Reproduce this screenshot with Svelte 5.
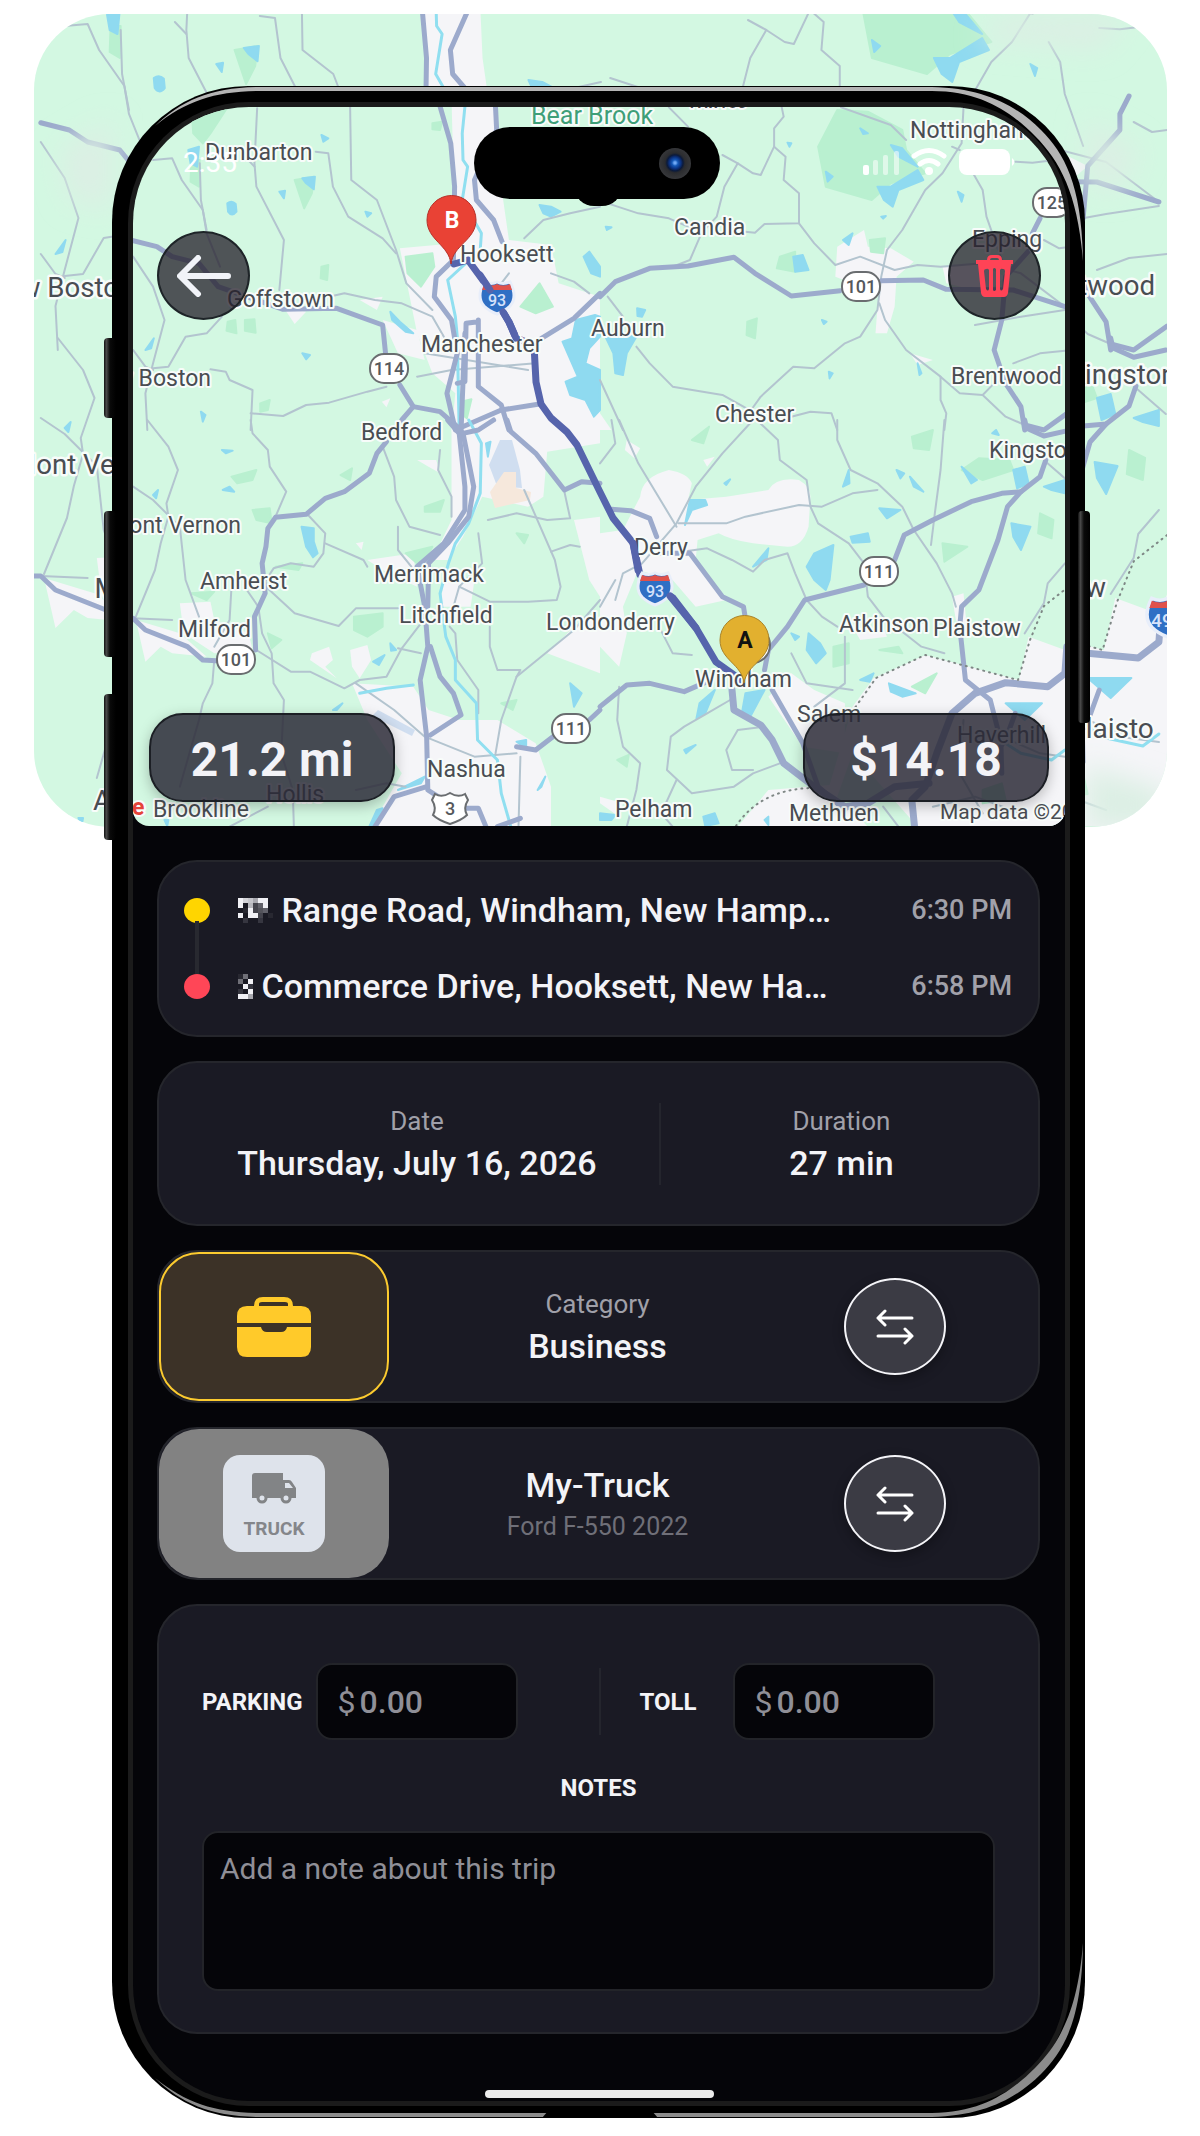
<script lang="ts">
  type Quad = { at: string, urban: string[], park: string[], water: string[], river: string[], minor: string[], major: string[], wide: string[] }

  // the map is kept in four tiles, each with its own 1568 x 1290 grid
  const tiles: Quad[] = [
    {
      at: 'scale(0.38265 0.33333)',
      urban: [
        'M1180 300 L1300 300 L1310 560 L1330 720 L1440 735 L1460 850 L1568 890 L1568 1295 L1180 1295 L1190 1180 L1130 1120 L1090 1000 L1045 745 L1190 730 Z',
        'M1000 960 L1090 990 L1110 1080 L1040 1060 Z',
        'M740 920 L800 935 L770 972 Z',
        'M940 900 L1000 890 L985 930 Z',
        'M998 1205 L1020 1195 L1010 1222 Z'
      ],
      park: [
        'M500 320 L590 330 L550 400 L530 430 L505 400 Z',
        'M770 540 L820 530 L815 580 L795 625 Z',
        'M1060 770 L1130 760 L1135 800 L1100 860 L1065 820 Z',
        'M1360 920 L1410 850 L1445 920 L1400 940 Z',
        'M500 480 L522 480 L520 560 L498 545 Z',
        'M595 965 L615 960 L618 1000 L592 992 Z M640 960 L665 958 L668 998 L640 992 Z',
        'M840 800 L858 795 L855 840 L838 835 Z',
        'M1205 1205 L1232 1198 L1220 1255 L1204 1240 Z',
        'M680 1210 L705 1200 L700 1230 L680 1235 Z',
        'M1130 370 L1155 365 L1150 390 L1130 388 Z'
      ],
      water: [
        'M594 610 Q606 600 616 612 L618 635 Q606 652 596 635 Z',
        'M790 535 L823 530 L820 568 L800 550 Z',
        'M730 575 L745 572 L742 595 Z',
        'M492 450 L520 440 L515 500 L498 490 Z',
        'M1495 1015 L1505 960 L1555 945 L1568 950 L1568 1010 L1540 1045 L1530 1090 L1568 1110 L1568 1230 L1552 1250 L1530 1200 L1490 1185 L1478 1145 L1510 1130 L1470 1025 Z',
        'M1525 770 L1540 755 L1568 800 L1568 830 L1545 820 Z',
        'M1410 615 L1440 620 L1465 635 L1440 650 L1420 640 Z',
        'M1020 935 L1045 965 L1080 1000 L1060 995 L1025 960 Z',
        'M790 1060 L810 1065 L800 1078 Z M525 1235 L537 1245 L530 1265 Z M955 635 L970 640 L960 650 Z',
        'M840 405 L858 415 L845 425 Z M380 1050 L402 1015 L395 1045 Z M600 910 L612 915 L604 928 Z'
      ],
      river: [
        'M1215 320 L1208 400 L1210 480 L1222 500 L1208 600 L1258 700 L1255 750 L1170 840 L1190 950 L1195 1010 L1200 1290'
      ],
      minor: [
        'M672 325 L665 490 L670 560 L742 720 L730 870',
        'M915 322 L918 540 L985 600 L1035 750 L1062 850 L1130 930',
        'M400 480 L450 475 L475 540 L530 630 L540 700 L575 800',
        'M640 470 L665 500',
        'M825 455 L858 460 L870 560 L910 650 L1000 715 L1035 760',
        'M522 490 L525 600 L540 690',
        'M348 770 L400 860 L430 960 L400 1090 L380 1180 L385 1290',
        'M400 1105 L440 1100 L485 1010 L540 1000 L580 950',
        'M348 1050 L380 1100 L400 1110',
        'M550 1108 L590 1115 L600 1140 L660 1170 L655 1290',
        'M655 1240 L740 1248 L800 1215 L860 1208 L960 1175 L1010 1160',
        'M860 890 L900 880 L980 900 L1050 910 L1130 950 L1160 1010',
        'M1370 715 L1420 660 L1490 640 L1568 620',
        'M1330 820 L1310 850 M1440 820 L1500 845 L1540 880',
        'M1090 1130 L1180 1110 L1400 1090 M1110 1060 L1380 1110'
      ],
      major: [
        'M1130 150 L1135 260 L1178 430 L1188 560 L1185 780 L1140 830 L1135 890 L1180 960 L1195 1060 L1168 1180 L1190 1290',
        'M1270 150 L1295 322 L1298 390 L1240 540 L1245 600 L1290 660 L1312 725',
        'M348 722 L410 740 L450 770 L520 790 L570 860 L740 928 L880 925 L1000 975 L1008 1065',
        'M1045 1155 L1080 1220 L1150 1235 L1200 1285 L1310 1230 L1410 1212',
        'M1050 1260 L1080 1220',
        'M1568 880 L1500 955 L1415 1015',
        'M1250 960 L1250 1160 L1310 1215 L1330 1290 M1250 965 L1218 970 L1215 1145 L1195 1150',
        'M1215 1000 L1205 1290'
      ],
      wide: []
    },
    {
      at: 'translate(600 0) scale(0.38265 0.33333)',
      urban: [
        'M620 740 L690 690 L700 740 L760 745 L820 785 L775 830 L770 920 L750 1000 L720 1000 L728 880 L615 830 Z',
        'M895 800 L990 790 L1060 830 L1010 880 L905 850 Z',
        'M0 1240 L30 1290 L0 1290 Z',
        'M810 1060 L870 1080 L830 1095 Z'
      ],
      park: [
        'M570 440 L620 330 L700 335 L790 390 L800 450 L850 520 L760 550 L710 600 L590 560 Z',
        'M470 770 L510 755 L510 815 L462 805 Z',
        'M705 720 L745 715 L740 760 L708 755 Z',
        'M385 965 L410 955 L405 1015 L383 1005 Z'
      ],
      water: [
        'M725 560 L760 560 L830 510 L845 540 L780 570 L765 620 L742 600 Z',
        'M760 435 L790 445 L830 500 L780 470 Z',
        'M505 770 L530 765 L545 810 L510 815 Z',
        'M10 1000 L95 1010 L70 1060 L60 1125 L40 1120 L35 1060 Z',
        'M635 720 L660 700 L650 735 Z M935 575 L950 585 L945 605 Z M680 385 L700 400 L688 402 Z',
        'M97 925 L118 930 L110 950 L98 948 Z M580 960 L592 965 L585 972 Z M598 1115 L608 1120 L600 1135 Z',
        'M590 515 L608 530 L595 545 Z M830 1090 L840 1120 L835 1125 Z M735 650 L747 648 L740 656 Z',
        'M15 680 L30 682 L18 690 Z M490 428 L500 430 L495 440 Z'
      ],
      river: [],
      minor: [
        'M475 322 L480 350 L455 385 L455 440 L420 525 L400 520 L360 490 L320 465',
        'M360 490 L325 560 L305 650 L265 700 L235 780 L195 798',
        'M455 440 L485 470 L480 540 L520 580 L520 670 L430 672 L405 698 L380 695',
        'M20 610 L100 640 L180 655 L230 680',
        'M520 670 L560 730 L615 795 L680 770 L770 810 L830 795 L890 800 L1000 790 L1100 820 L1215 920',
        'M180 322 L230 380 M630 322 L760 375 L800 420 M950 322 L945 430 L895 520 L850 570 L790 690 L750 750 L735 830 L725 930 L680 1010 L640 1030 L560 1105 L505 1100 L420 1190 L395 1230',
        'M730 910 L745 960 L800 1050 L890 1130 L940 1180 L1000 1185 L1060 1250 L1110 1275',
        'M890 1130 L890 1200 L905 1240 L900 1290',
        'M1000 1185 L1030 1150 L1075 1130',
        'M920 440 L940 450 M975 520 L1000 570 L1010 650 L1050 780',
        'M1085 485 L1130 488 L1190 480 M1160 720 L1200 745 L1233 740 M980 975 L1100 950 L1215 930',
        'M20 890 L60 950 M95 1040 L130 1090 L190 1160 L320 1185 L390 1230',
        'M500 1250 L550 1235 L605 1240 L620 1290 M0 1140 L60 1290',
        'M1080 1090 L1150 1060 L1233 1050'
      ],
      major: [
        'M0 890 L40 845 L130 805 L230 798 L350 772 L405 820 L500 888 L628 872',
        'M735 842 L845 840 L905 868 L1080 870 L1215 920',
        'M1150 655 L1130 700 L1130 740 L1060 830 L1050 960 L1030 1050 L1060 1150 L1100 1220 L1110 1290',
        'M1110 1275 L1160 1290 L1233 1230'
      ],
      wide: []
    },
    {
      at: 'translate(0 420) scale(0.38265 0.33333)',
      urban: [
        'M1180 0 L1568 0 L1568 70 L1430 95 L1420 230 L1380 260 L1260 230 L1210 350 L1170 420 L1130 420 L1180 300 Z',
        'M1500 300 L1568 290 L1568 530 L1540 480 Z',
        'M920 790 L1080 800 L1120 870 L1200 900 L1300 900 L1400 970 L1440 1100 L1440 1220 L970 1220 L1050 1060 L960 900 Z',
        'M1500 620 L1568 590 L1568 760 L1430 700 Z',
        'M470 550 L550 545 L560 600 L650 640 L660 690 L560 700 L480 640 Z',
        'M355 600 L470 640 L540 710 L450 700 L420 680 L380 725 Z',
        'M815 700 L860 680 L870 720 L850 740 L880 775 L810 720 Z M915 690 L960 675 L970 720 L940 775 L920 740 Z',
        'M1090 120 L1140 120 L1150 160 L1120 140 Z M930 370 L950 365 L945 390 Z M960 420 L1080 400 L1090 500 L1000 450 Z',
        'M1160 480 L1240 480 L1230 560 L1150 560 Z'
      ],
      park: [
        'M925 590 L1000 580 L1000 620 L960 650 L925 630 Z',
        'M605 170 L670 150 L660 180 L620 190 Z M890 165 L920 145 L915 180 Z',
        'M660 270 L705 265 L710 310 L670 300 Z M1110 260 L1160 240 L1150 275 L1110 275 Z',
        'M1060 400 L1130 380 L1100 440 Z M1310 850 L1350 840 L1340 870 Z M700 640 L735 660 L710 685 Z',
        'M1350 340 L1380 345 L1370 370 Z M500 520 L560 515 L540 540 Z M720 440 L790 430 L780 450 Z'
      ],
      water: [
        'M788 320 L820 325 L820 365 L830 400 L818 412 L800 380 Z',
        'M1490 790 L1520 820 L1500 860 Z M975 725 L1005 705 L990 735 Z M1020 670 L1035 690 L1022 692 Z',
        'M870 870 L895 850 L880 870 Z M580 90 L608 92 L590 100 Z M582 210 L600 200 L612 215 Z',
        'M400 225 L413 210 L408 235 Z M1405 1110 L1425 1070 L1415 1100 Z M1350 965 L1375 960 L1375 985 Z',
        'M1040 1110 L1110 1070 L1100 1090 Z M430 1200 L440 1200 L437 1218 Z',
        'M985 1170 L1000 1165 L975 1220 L965 1220 Z M1270 70 L1282 65 L1275 110 Z'
      ],
      river: [
        'M1225 0 L1258 70 L1255 220 L1225 310 L1190 370 L1172 430 L1150 520 L1165 650 L1190 720 L1190 780 L1245 850 L1248 960 L1300 1020 L1310 1120 L1335 1220',
        'M940 820 L1010 805 L1080 795'
      ],
      minor: [
        'M385 0 L440 80 L465 150 L435 250 L440 290 L420 370 L405 450 L355 590',
        'M348 200 L400 240 L470 320 L485 480 L520 590',
        'M655 0 L660 40 L700 90 L705 140 L748 215 L720 290',
        'M805 285 L850 340 L845 400 L820 440 L760 430 L715 445 L695 480',
        'M850 370 L950 420 L960 440',
        'M695 500 L770 580 L885 618 L930 565 L1040 565',
        'M1000 80 L1030 170 L1035 240 L1070 320 L1150 345',
        'M1150 90 L1145 150 L1180 230 L1180 290',
        'M645 510 L675 560 L685 640 L710 700 L715 790 L742 840 L735 1000 L765 1110 L768 1220',
        'M670 690 L760 755 L810 755 L900 805 L940 780 L1010 770 L1050 685 L1100 610',
        'M560 720 L555 790 L530 850 L520 900 L470 1100',
        'M930 790 L1030 870 L1110 950 L1240 1010 L1350 1000',
        'M1040 685 L1100 700 M1175 620 L1190 640 L1195 720 L1250 810 L1250 880',
        'M1370 210 L1450 420 L1465 500 L1455 540 L1380 545 L1280 545 L1200 500',
        'M1280 620 L1280 680 L1300 750 L1360 750 L1350 770 L1310 900 L1295 1000',
        'M1350 770 L1500 630 L1568 540 M1275 300 L1350 280 L1430 300 L1490 295 L1475 215',
        'M1250 340 L1260 430 L1200 500 L1175 600 M1040 320 L1040 390 L1075 440',
        'M1440 395 L1490 375 L1515 380 M605 500 L600 600 L560 680',
        'M600 1220 L700 1160 M1360 1010 L1355 1220 M930 1110 L1010 1090 L1060 1100',
        'M348 595 L450 600'
      ],
      major: [
        'M1010 65 L985 100 L965 160 L900 215 L850 235 L800 283 L720 292 L700 325 L695 380 L685 430 L693 520 L665 590 L668 690',
        'M1170 0 L1200 40 L1215 200 L1215 270 L1160 370 L1090 440 L1110 560 L1118 680 L1098 780 L1115 950 L1118 1110 L1145 1130',
        'M1185 10 L1210 40 L1238 200 L1225 290 L1170 370 L1120 430 L1118 560',
        'M1210 40 L1250 30 L1290 0',
        'M1125 680 L1150 770 L1185 820 L1205 885 L1125 945',
        'M1115 1100 L1030 1130 L980 1220',
        'M1215 1165 L1250 1165 L1270 1220 M1300 1220 L1360 1195',
        'M300 595 L348 595 L380 630 L490 680 L530 720 L565 722',
        'M1350 980 L1400 990 L1445 950 M1540 900 L1568 870',
        'M1325 0 L1335 35 L1400 100 L1475 210 L1520 185 L1568 190'
      ],
      wide: []
    },
    {
      at: 'translate(600 420) scale(0.38265 0.33333)',
      urban: [
        'M105 230 Q110 170 180 150 Q230 160 240 190 L230 240 L330 230 L440 210 Q460 170 520 180 Q550 200 550 230 L545 320 Q530 380 490 380 L400 370 Q340 360 310 340 L255 360 L250 420 L330 540 L250 560 L190 480 L100 450 L60 560 L70 640 L50 740 L0 680 L0 340 L60 330 Z',
        'M70 60 L105 85 L90 115 L65 90 Z',
        'M715 775 L850 705 L1095 780 L1120 650 L1215 690 L1233 640 L1233 1220 L830 1220 L660 1000 L620 1130 L700 1220 L360 1220 L440 1110 L600 1095 L660 860 Z',
        'M500 760 L560 810 L640 850 L640 1000 L530 980 L440 830 Z',
        'M920 530 L950 520 L960 640 L930 600 Z M670 640 L740 620 L750 650 L680 660 Z',
        'M810 620 L850 610 L840 640 Z M0 1130 L60 1150 L50 1190 L0 1150 Z M270 120 L300 110 L280 140 Z'
      ],
      park: [
        'M945 150 L990 115 L1070 120 L1080 150 L1000 180 Z',
        'M1150 280 L1185 300 L1180 355 L1145 340 Z M895 370 L960 380 L900 425 Z',
        'M815 50 L870 30 L860 90 L820 85 Z M240 60 L285 20 L270 70 Z',
        'M815 800 L880 760 L850 820 Z M45 1020 L75 1005 L70 1040 Z M610 680 L650 670 L650 730 L610 740 Z',
        'M1000 1110 L1050 1090 L1060 1140 L1000 1150 Z M730 690 L780 680 L790 700 Z'
      ],
      water: [
        'M540 440 L560 400 L610 375 L600 480 L590 510 L560 480 Z',
        'M235 240 L275 240 L280 255 L240 270 L222 315 Z M400 440 L440 385 L435 420 Z',
        'M730 265 L785 270 L750 295 Z M655 350 L700 340 L705 365 L660 368 Z M635 200 L650 150 L652 190 Z',
        'M1080 150 L1110 140 L1120 190 L1090 205 Z M1075 310 L1125 320 L1100 390 L1080 350 Z',
        'M1160 200 L1215 180 L1215 220 L1180 210 Z M945 140 L985 180 L970 190 Z',
        'M545 640 L575 670 L590 700 L565 730 L540 690 Z M755 790 L825 820 L790 830 L760 815 Z',
        'M380 820 L430 810 L395 885 L370 885 Z M260 850 L300 810 L275 880 L252 895 Z M1060 850 L1155 850 L1110 900 Z',
        'M680 780 L715 760 L705 785 Z M220 990 L250 975 L225 1000 Z M270 1190 L300 1180 L310 1210 L275 1218 Z',
        'M810 170 L845 215 L820 200 Z M775 150 L795 160 L785 175 Z M325 190 L340 178 L330 195 Z M1025 40 L1035 30 L1042 45 Z',
        'M0 1180 L40 1185 L30 1200 L0 1200 Z M430 1200 L440 1190 L440 1215 Z M500 640 L520 650 L510 660 Z'
      ],
      river: [
        'M1215 990 L1180 1020 L1100 1000 L1060 970'
      ],
      minor: [
        'M50 0 L100 130 L200 320',
        'M400 0 L320 100 L250 200 L200 310 L110 430 L60 460 L40 540',
        'M410 0 L465 60 L470 120 L540 180 L550 260 L570 310 L650 370 L690 430 L700 530 L740 590 L840 680 L900 700',
        'M620 0 L620 60 L655 150 L725 190 L790 260 L820 330 L880 430 L920 520 L930 560',
        'M900 0 L890 150 L875 280 L865 375',
        'M205 310 L330 310 L380 290 L520 255 L580 260 L660 220 L725 210',
        'M215 395 L280 385 L345 420 L400 455 L430 420 L490 400 L510 460 L540 540 L580 590 L620 620',
        'M340 840 L280 880 L220 920 L185 950 L175 1050 L240 1120 L350 1100 L400 1060 L470 1030',
        'M50 800 L45 900 L60 980 L105 1030 L95 1110 L70 1220',
        'M360 930 L330 990 L345 1050 L400 1050 M360 930 L430 920 M200 1080 L160 1180 L190 1220',
        'M500 700 L540 790 L660 810 M640 650 L640 790 L560 860',
        'M150 610 L190 700 L240 705 M0 560 L40 480 M0 130 L40 70 L30 0',
        'M1215 430 L1170 490 L1160 550 L1110 640 M1165 125 L1230 190',
        'M1070 960 L1150 1000 L1215 1010 M870 1160 L980 1130 L1100 1180 M740 1160 L780 1220 M950 900 L940 1060 L1000 1180'
      ],
      major: [
        'M0 860 L70 795 L130 790 L220 815 L280 785',
        'M30 268 L80 272 L130 295 L148 350',
        'M160 400 L235 400 L320 530 L375 560 L382 610',
        'M430 750 L440 690 L490 620 L535 540 L690 495',
        'M770 420 L795 345 L870 300 L970 245 L1050 220 L1100 215 L1150 170 L1165 120',
        'M1110 0 L1115 25 L1160 48 L1230 30',
        'M1100 215 L1065 260 L1040 360 L990 510 L945 560 L940 620 L955 780 L1020 840 L1040 930',
        'M450 810 L530 970 L570 1100 L640 1170',
        'M1050 1060 L1048 980 L1066 940 L1085 880'
      ],
      wide: [
        'M822 1220 L815 1140 L850 1100 L880 1000 L920 880 L980 820 L1060 788 L1170 800 L1215 760 L1220 680',
        'M345 810 L350 870 L420 915 L450 960 L480 1030 L560 1100 L640 1160 L700 1150 L770 1100 L860 1090'
      ]
    }
  ]

  const route = 'M454 264 L468 260 L490 290 L509 322 L516 338 L534 345 L536 382 L541 404 L551 418 L567 432 L577 445 L600 492 L613 518 L633 543 L640 575 L657 587 L673 598 L696 628 L716 662 L744 682'

  const towns = [
    ['New Boston', 211, 386, 'end'], ['Goffstown', 227, 307], ['Hooksett', 460, 262], ['Manchester', 421, 352],
    ['Candia', 674, 235], ['Auburn', 591, 336], ['Brentwood', 951, 384], ['Chester', 715, 422],
    ['Bedford', 361, 440], ['Kingston', 989, 458], ['Mont Vernon', 241, 533, 'end'], ['Amherst', 200, 589],
    ['Merrimack', 374, 582], ['Litchfield', 399, 623], ['Londonderry', 546, 630], ['Milford', 178, 637],
    ['Derry', 634, 555], ['Windham', 695, 687], ['Atkinson', 839, 632], ['Plaistow', 933, 636],
    ['Salem', 797, 722], ['Nashua', 427, 777], ['Pelham', 615, 817], ['Methuen', 789, 821]
  ]

  // towns that show on the phone only
  const innerTowns = [
    ['Dunbarton', 205, 160], ['Nottingham', 910, 138], ['Epping', 972, 247], ['Haverhill', 957, 743],
    ['Hollis', 266, 802], ['Brookline', 153, 817]
  ]

  const shields = [
    ['114', 389, 369], ['101', 861, 287], ['101', 236, 660], ['111', 571, 729], ['111', 879, 572]
  ]

  const stops = [
    {
      colour: 'yellow', address: 'Range Road, Windham, New Hampshire', time: '6:30 PM',
      mask: ['fdcaff0', 'f0b35f0', '01f3450', 'f0ff301', '0200200']
    },
    {
      colour: 'red', address: 'Commerce Drive, Hooksett, New Hampshire', time: '6:58 PM',
      mask: ['160', '60f', '0f2', '20f', 'ffa']
    }
  ]

  let parking = $state('')
  let toll = $state('')
  let notes = $state('')
</script>

{#snippet terrain()}
  <rect class="land" x="-20" y="60" width="1240" height="820" />
  {#each tiles as t}
    <g transform={t.at}>
      {#each t.urban as d}<path class="urban" {d} />{/each}
      {#each t.park as d}<path class="park" {d} />{/each}
      {#each t.water as d}<path class="water" {d} />{/each}
    </g>
  {/each}
  <path class="field" d="M489 465 L500 440 L512 440 L520 470 L522 488 L497 486 Z M378 710 L415 730 L412 736 L372 716 Z" />
  <path class="sand" d="M490 492 L504 472 L516 472 L516 488 L531 492 L530 500 L495 508 Z" />
  {#each tiles as t}
    <g transform={t.at}>
      {#each t.minor as d}<path class="minor" {d} />{/each}
      {#each t.river as d}<path class="river" {d} />{/each}
      {#each t.major as d}<path class="major" {d} />{/each}
      {#each t.wide as d}<path class="wide" {d} />{/each}
    </g>
  {/each}
  <path class="border" d="M736 826 Q760 790 810 788 M852 712 L876 678 L925 655 L1018 680 L1030 640 L1044 606 L1072 584" />
  <path class="route" d={route} />
{/snippet}

{#snippet town(name, x, y, anchor)}
  <text class="town" {x} {y} text-anchor={anchor ?? 'start'}>{name}</text>
{/snippet}

{#snippet shield(num, x, y)}
  <rect class="plate" x={x - 19} y={y - 15} width="38" height="29" rx="14" />
  <text class="num" {x} y={y + 6}>{num}</text>
{/snippet}

{#snippet interstate(num, x, y)}
  <g transform="translate({x} {y})">
    <path class="crest" d="M-13 -15 Q-6 -12 0 -15 Q6 -12 13 -15 Q21 0 13 9 Q8 14 0 17 Q-8 14 -13 9 Q-21 0 -13 -15 Z" />
    <path class="crest-top" d="M-13 -13 Q-6 -10 0 -13 Q6 -10 13 -13 L15 -7 H-15 Z" />
    <text class="crest-num" y="9">{num}</text>
  </g>
{/snippet}

{#snippet places()}
  {#each towns as [name, x, y, anchor]}
    {@render town(name, x, y, anchor)}
  {/each}
  {#each shields as [num, x, y]}
    {@render shield(num, x, y)}
  {/each}
{/snippet}

{#snippet swapIcon()}
  <svg class="swap" viewBox="0 0 38 36" aria-hidden="true">
    <path d="M36 9 H2 M9 2 L2 9 L9 16 M2 27 H36 M29 20 L36 27 L29 34" />
  </svg>
{/snippet}

<main class="stage">
  <svg class="backdrop" viewBox="34 14 1133 813" preserveAspectRatio="xMidYMid slice" aria-hidden="true">
    <defs>
      <filter id="haze"><feGaussianBlur stdDeviation="14" /></filter>
    </defs>
    <g transform="translate(-119 -166) scale(1.2)">
      {@render terrain()}
      {@render places()}
      {@render interstate('495', 1072, 652)}
    </g>
    <g class="haze" filter="url(#haze)">
      <path d="M60 150 L112 120 L112 210 L70 200 Z M1085 120 L1140 150 L1120 190 L1090 190 Z M1000 14 L1130 14 L1100 50 L980 40 Z" />
      <path d="M1085 765 L1167 790 L1167 830 L1085 830 Z" />
    </g>
    <text class="town outer" x="1068" y="738">Plaisto</text>
    <text class="town outer" x="93" y="810">A</text>
  </svg>

  <div class="phone">
    <span class="key silent"></span>
    <span class="key up"></span>
    <span class="key down"></span>
    <span class="key power"></span>

    <div class="screen">
      <section class="map">
        <svg class="chart" viewBox="133 107 932 719" preserveAspectRatio="xMidYMid slice" role="img" aria-label="Route from Windham to Hooksett">
          {@render terrain()}
          {@render interstate('93', 497, 297)}
          {@render interstate('93', 655, 588)}
          {@render places()}
          {#each innerTowns as [name, x, y]}
            {@render town(name, x, y)}
          {/each}
          {@render shield('125', 1052, 203)}
          <path class="route" d="M480 275 L490 290 M503 312 L509 322 L516 338 M633 543 L638 570 M670 596 L696 628" />
          <path class="plate" d="M435 794 Q442 798 450 793 Q458 798 465 794 L468 800 Q463 808 467 815 Q462 820 450 824 Q438 820 433 815 Q437 808 432 800 Z" />
          <text class="num" x="450" y="815">3</text>
          <text class="town reserve" x="531" y="124">Bear Brook</text>
          <text class="town peaks" x="690" y="108">PAWTUC</text>
          <text class="town fine" x="940" y="819">Map data ©2026</text>
          <text class="town pin-red" x="132" y="815">e</text>

          <circle class="plate" cx="752" cy="645" r="18" />
          <path class="pin a" d="M744 683 C742 664 720 660 720 640 A24 24 0 0 1 769 640 C769 660 747 664 744 683 Z" />
          <text class="letter a" x="745" y="648">A</text>
          <path class="pin b" d="M451 264 C449 245 427 240 427 220 A24 24 0 0 1 476 220 C476 240 453 245 451 264 Z" />
          <text class="letter b" x="452" y="228">B</text>
        </svg>

        <header class="status">
          <time>2:35</time>
          <svg class="signals" viewBox="0 0 152 30" aria-hidden="true">
            <rect x="0" y="18" width="6" height="10" rx="2" />
            <g opacity="0.55">
              <rect x="10" y="13" width="5" height="15" rx="2" />
              <rect x="20" y="8" width="5" height="20" rx="2" />
              <rect x="31" y="4" width="5" height="24" rx="2" />
            </g>
            <path class="wave" d="M51 9 Q66 -2 81 9 M57 17 Q66 10 75 17" />
            <circle cx="66" cy="24" r="4" />
            <rect x="96" y="2" width="51" height="26" rx="8" />
            <path d="M149 11 Q154 15 149 19 Z" />
          </svg>
        </header>

        <nav class="controls">
          <button class="round" aria-label="Back">
            <svg class="back" viewBox="0 0 54 42"><path d="M51 21 H4 M21 3 L3 21 L21 39" /></svg>
          </button>
          <button class="round" aria-label="Delete trip">
            <svg class="bin" viewBox="0 0 37 42">
              <path fill-rule="evenodd" d="M11 5 Q11 0 16 0 H21 Q26 0 26 5 H37 V9 H35 L32 38 Q31 42 28 42 H9 Q6 42 5 38 L2 9 H0 V5 Z M14 5 H23 Q23 3 21 3 H16 Q14 3 14 5 Z M10 14 Q8 14 8 16 L10 34 Q12 37 13 34 V15 Q12 13 10 14 Z M17 14 V35 Q18 37 20 35 V14 Q18 12 17 14 Z M24 15 V34 Q25 37 27 34 L29 16 Q29 14 27 14 Q25 13 24 15 Z" />
            </svg>
          </button>
        </nav>

        <div class="totals">
          <strong class="pill">21.2 mi</strong>
          <strong class="pill">$14.18</strong>
        </div>
      </section>

      <div class="cards">
        <section class="card stops">
          {#each stops as stop}
            <div class="stop">
              <span class="dot {stop.colour}"></span>
              <p class="address">
                <svg class="mask" viewBox="0 0 {stop.mask[0].length * 5} 25" style:width="{stop.mask[0].length * 5}px" aria-hidden="true">
                  {#each stop.mask as row, r}
                    {#each row as c, i}
                      <rect x={i * 5} y={r * 5} width="5" height="5" fill="#f0f0f5" fill-opacity={parseInt(c, 16) / 15} />
                    {/each}
                  {/each}
                </svg>
                {stop.address}
              </p>
              <time>{stop.time}</time>
            </div>
          {/each}
        </section>

        <section class="card facts">
          <div class="fact">
            <span class="label">Date</span>
            <span class="value">Thursday, July 16, 2026</span>
          </div>
          <div class="fact">
            <span class="label">Duration</span>
            <span class="value">27 min</span>
          </div>
        </section>

        <section class="card choice">
          <div class="tile gold">
            <svg class="case" viewBox="0 0 74 60" aria-hidden="true">
              <path fill-rule="evenodd" d="M17 9 Q17 0 26 0 H47 Q56 0 56 9 H64 Q74 9 74 19 V26 H0 V19 Q0 9 10 9 Z M22 9 H51 V7 Q51 5 48 5 H25 Q22 5 22 7 Z" />
              <path d="M0 30 H24 Q25 35 30 35 H44 Q49 35 50 30 H74 V50 Q74 60 64 60 H10 Q0 60 0 50 Z" />
            </svg>
          </div>
          <div class="picked">
            <span class="label">Category</span>
            <span class="value">Business</span>
          </div>
          <div class="action">
            <button class="change" aria-label="Change category">{@render swapIcon()}</button>
          </div>
        </section>

        <section class="card choice">
          <div class="tile grey">
            <div class="badge">
              <svg class="truck" viewBox="0 0 44 30" aria-hidden="true">
                <path fill-rule="evenodd" d="M3 0 H31 V7 H37 Q39 7 40 9 L44 15 V25 H0 V3 Q0 0 3 0 Z M33 10 V15 H41 L37 10 Z" />
                <circle cx="10" cy="25" r="4" />
                <circle cx="34" cy="25" r="4" />
              </svg>
              TRUCK
            </div>
          </div>
          <div class="picked">
            <span class="value">My-Truck</span>
            <span class="label dim">Ford F-550 2022</span>
          </div>
          <div class="action">
            <button class="change" aria-label="Change vehicle">{@render swapIcon()}</button>
          </div>
        </section>

        <form class="card extras">
          <div class="costs">
            <div class="cost">
              <label for="parking">PARKING</label>
              <span class="money">$<input id="parking" inputmode="decimal" placeholder="0.00" bind:value={parking} /></span>
            </div>
            <div class="cost">
              <label for="toll">TOLL</label>
              <span class="money">$<input id="toll" inputmode="decimal" placeholder="0.00" bind:value={toll} /></span>
            </div>
          </div>
          <label class="notes-label" for="notes">NOTES</label>
          <textarea id="notes" placeholder="Add a note about this trip" bind:value={notes}></textarea>
        </form>
      </div>

      <div class="home-bar"></div>
    </div>

    <!-- light catching the metal edge -->
    <svg class="shine" viewBox="0 0 973 2033" preserveAspectRatio="none" aria-hidden="true">
      <path fill="#b4b4b4" d="M43 40 C70 14 100 1 150 1 H820 C872 2 905 20 929 44 C953 68 970 100 971 175 C966 110 949 76 923 50 C900 27 870 5 820 5 H150 C105 5 75 14 43 40 Z" />
      <path fill="#8c8c8c" d="M43 1993 C70 2019 100 2032 150 2032 H820 C872 2031 905 2013 929 1989 C953 1965 970 1933 971 1858 C966 1923 949 1957 923 1983 C900 2006 870 2028 820 2028 H150 C105 2028 75 2019 43 1993 Z" />
      <path fill="#000" d="M430 2033 L436 2026 H540 L546 2033 Z" />
    </svg>
    <div class="island"><span class="lens"></span></div>
  </div>
</main>

<style>
  :global(body) {
    margin: 0;
    background: #fff;
  }

  .stage {
    position: relative;
    padding: 86px 115px 17px 112px;
    font-family: Roboto, "Liberation Sans", sans-serif;
    color: #f3f3f7;
  }

  .backdrop {
    position: absolute;
    top: 14px;
    left: 34px;
    width: calc(100% - 67px);
    height: 813px;
    border-radius: 76px;
  }

  .haze path {
    fill: #dcefe4;
  }

  /* map */
  .land { fill: #d3f8e2; }
  .urban { fill: #f5f5f8; }
  .park { fill: #b9f0d0; stroke: #b9f0d0; }
  .water { fill: #8fdaf0; stroke: #8fdaf0; }
  .field { fill: #d0def0; }
  .sand { fill: #f6e8dc; }

  .park, .water {
    stroke-width: 2;
    stroke-linejoin: round;
    vector-effect: non-scaling-stroke;
  }

  .minor, .major, .wide, .river, .route, .border {
    fill: none;
    stroke-linejoin: round;
    stroke-linecap: round;
    vector-effect: non-scaling-stroke;
  }

  .minor { stroke: #b3c4cf; stroke-width: 2; }
  .river { stroke: #90dff0; stroke-width: 3; }
  .major { stroke: #9caacc; stroke-width: 5; }
  .wide { stroke: #9caacc; stroke-width: 7; }
  .route { stroke: #5664ac; stroke-width: 7; }
  .border { stroke: #7e8785; stroke-width: 2; stroke-dasharray: 1 5; }

  .town {
    font-size: 23px;
    fill: #494d52;
    stroke: #f8fcfa;
    stroke-width: 4px;
    stroke-linejoin: round;
    paint-order: stroke;
  }

  .outer { font-size: 28px; }
  .reserve { font-size: 25px; fill: #3f9f78; }
  .peaks { font-size: 14px; font-weight: 700; }
  .fine { font-size: 21px; }
  .pin-red { fill: #e5443a; font-weight: 700; }

  .plate {
    fill: #fff;
    stroke: #6a6d70;
    stroke-width: 2;
  }

  .num {
    font-size: 18px;
    font-weight: 500;
    fill: #55585c;
    text-anchor: middle;
  }

  .crest { fill: #2f6fc4; stroke: #e8eefa; stroke-width: 3; }
  .crest-top { fill: #e0514b; }

  .crest-num {
    font-size: 16px;
    font-weight: 500;
    fill: #d5e2fb;
    text-anchor: middle;
  }

  .pin { stroke-width: 1; }
  .pin.a { fill: #e2b02f; stroke: #a9832a; }
  .pin.b { fill: #e94235; stroke: #b6322a; }

  .letter {
    font-size: 23px;
    font-weight: 700;
    text-anchor: middle;
  }

  .letter.a { fill: #111; }
  .letter.b { fill: #fff; }

  /* phone body */
  .phone {
    position: relative;
    z-index: 0;
    padding: 21px 20px 17px 21px;
    border-radius: 136px;
    background: #000;
  }

  .screen {
    display: flex;
    flex-direction: column;
    overflow: hidden;
    border-radius: 116px;
    background: #050509;
    box-shadow: 0 0 0 5px #1b1b1b;
  }

  .key {
    position: absolute;
    left: -8px;
    width: 12px;
    border-radius: 4px;
    background: linear-gradient(90deg, #111, #4a4a4a 20%, #0a0a0a 50%, #000);
    z-index: -1;
  }

  .silent { top: 252px; height: 80px; }
  .up { top: 425px; height: 146px; }
  .down { top: 608px; height: 146px; }
  .power { top: 425px; left: auto; right: -5px; height: 212px; }

  .shine {
    position: absolute;
    inset: 0;
    width: 100%;
    height: 100%;
    pointer-events: none;
  }

  .island {
    position: absolute;
    top: 41px;
    left: 50%;
    display: flex;
    align-items: center;
    justify-content: flex-end;
    width: 246px;
    height: 72px;
    padding-right: 29px;
    box-sizing: border-box;
    margin-left: -125px;
    border-radius: 36px;
    background: #000;
  }

  .island::after {
    content: "";
    position: absolute;
    left: 100px;
    bottom: -7px;
    width: 48px;
    height: 40px;
    border-radius: 24px;
    background: #000;
  }

  .lens {
    width: 32px;
    height: 31px;
    border-radius: 50%;
    background: radial-gradient(circle at 50% 48%, #6fa8f5 0 1px, #1559b8 3px, #0a2f7c 6px, #0b1a3a 8px, #2b2c2f 10px, #37383b 16px);
  }

  /* map overlays */
  .map {
    position: relative;
    display: flex;
    flex-direction: column;
    height: 719px;
    overflow: hidden;
    border-radius: 0 0 16px 16px;
  }

  .chart {
    position: absolute;
    inset: 0;
    width: 100%;
    height: 100%;
  }

  .status, .controls, .totals {
    position: relative;
    display: flex;
    justify-content: space-between;
  }

  .status {
    align-items: center;
    height: 34px;
    padding: 38px 50px 0;
    color: #fff;
    font-size: 28px;
  }

  .signals {
    width: 152px;
    height: 30px;
    fill: #fff;
  }

  .wave {
    fill: none;
    stroke: #fff;
    stroke-width: 5;
    stroke-linecap: round;
  }

  .controls {
    padding: 52px 24px 0;
  }

  .round {
    display: grid;
    place-items: center;
    width: 93px;
    height: 89px;
    padding: 0;
    border: 2px solid #1e2428;
    border-radius: 50%;
    background: rgba(37, 32, 44, .76);
    cursor: pointer;
  }

  .back {
    width: 54px;
    height: 42px;
    fill: none;
    stroke: #f1f3f8;
    stroke-width: 6;
    stroke-linecap: round;
    stroke-linejoin: round;
  }

  .bin {
    width: 37px;
    height: 42px;
    fill: #ff4356;
  }

  .totals {
    margin-top: auto;
    padding: 0 16px 24px;
  }

  .pill {
    display: grid;
    place-items: center;
    width: 246px;
    height: 89px;
    padding-top: 4px;
    box-sizing: border-box;
    border: 2px solid #1c1f25;
    border-radius: 34px;
    background: rgba(42, 40, 54, .84);
    box-shadow: 0 4px 14px rgba(0, 0, 0, .25);
    font-size: 48px;
    font-weight: 700;
  }

  /* cards */
  .cards {
    display: flex;
    flex-direction: column;
    gap: 24px;
    padding: 34px 25px 56px 24px;
  }

  .card {
    box-sizing: border-box;
    border: 2px solid #25262c;
    border-radius: 40px;
    background: #1a1a24;
  }

  .stops {
    display: flex;
    flex-direction: column;
    gap: 36px;
    height: 177px;
    padding: 28px 26px 0 25px;
  }

  .stop {
    position: relative;
    display: flex;
    align-items: center;
    height: 40px;
  }

  .stop + .stop::before {
    content: "";
    position: absolute;
    left: 11px;
    bottom: 32px;
    width: 4px;
    height: 53px;
    background: #282930;
  }

  .dot {
    flex-shrink: 0;
    width: 26px;
    height: 25px;
    margin-right: 28px;
    border-radius: 50%;
  }

  .yellow { background: #ffd500; }
  .red { background: #ff4657; }

  .address {
    flex: 1;
    margin: 0 72px 0 0;
    overflow: hidden;
    white-space: nowrap;
    text-overflow: ellipsis;
    font-size: 34px;
    font-weight: 500;
    line-height: 40px;
  }

  .mask {
    height: 25px;
    vertical-align: -1px;
  }

  .stop time {
    color: #a1a1aa;
    font-size: 27px;
    font-weight: 500;
  }

  .facts {
    display: flex;
    align-items: center;
    height: 165px;
    padding: 0 16px;
  }

  .fact, .picked {
    display: flex;
    flex-direction: column;
    align-items: center;
    gap: 2px;
  }

  .fact {
    flex: 362;
  }

  .fact:first-child {
    flex: 485;
    border-right: 2px solid #24252d;
  }

  .label {
    color: #a0a0a9;
    font-size: 26px;
    line-height: 36px;
  }

  .dim {
    color: #6f6f78;
    font-size: 25px;
  }

  .value {
    font-size: 34px;
    font-weight: 500;
    line-height: 44px;
  }

  .choice {
    display: flex;
    align-items: stretch;
    height: 153px;
  }

  .tile {
    display: grid;
    place-items: center;
    width: 230px;
    box-sizing: border-box;
    border-radius: 40px;
  }

  .gold {
    border: 2px solid #fccb2f;
    background: #3c3227;
  }

  .grey {
    background: #828282;
  }

  .case {
    width: 74px;
    height: 60px;
    fill: #ffca2a;
  }

  .badge {
    display: flex;
    flex-direction: column;
    align-items: center;
    justify-content: space-between;
    width: 102px;
    height: 97px;
    box-sizing: border-box;
    padding: 18px 0 12px;
    border-radius: 17px;
    background: #dee3eb;
    color: #84868a;
    font-size: 19px;
    font-weight: 700;
    line-height: 22px;
  }

  .truck {
    width: 44px;
    height: 30px;
    overflow: visible;
    fill: #828486;
  }

  .truck circle {
    fill: #dee3eb;
    stroke: #828486;
    stroke-width: 3;
  }

  .picked {
    flex: 1;
    justify-content: center;
  }

  .action {
    display: flex;
    align-items: center;
    width: 232px;
    padding-left: 38px;
    box-sizing: border-box;
  }

  .change {
    display: grid;
    place-items: center;
    width: 102px;
    height: 97px;
    padding: 0;
    border: 2px solid #f4f4f8;
    border-radius: 50%;
    background: #3b3b44;
    box-shadow: 0 4px 12px rgba(0, 0, 0, .3);
    cursor: pointer;
  }

  .swap {
    width: 38px;
    height: 36px;
    fill: none;
    stroke: #fff;
    stroke-width: 3;
    stroke-linecap: round;
    stroke-linejoin: round;
  }

  .extras {
    display: flex;
    flex-direction: column;
    height: 430px;
    padding: 57px 43px 41px;
  }

  .costs {
    display: grid;
    grid-template-columns: 1fr 1fr;
  }

  .cost {
    display: flex;
    align-items: center;
    gap: 13px;
  }

  .cost + .cost {
    position: relative;
    padding-left: 41px;
  }

  .cost + .cost::before {
    content: "";
    position: absolute;
    left: 0;
    width: 2px;
    height: 67px;
    background: #24252d;
  }

  label {
    min-width: 80px;
    font-size: 24px;
    font-weight: 700;
    line-height: 28px;
  }

  .money {
    display: flex;
    align-items: center;
    gap: 4px;
    width: 202px;
    height: 77px;
    box-sizing: border-box;
    padding: 0 20px;
    border: 2px solid #232429;
    border-radius: 16px;
    background: #050509;
    color: #8f8f97;
    font-size: 32px;
  }

  input, textarea {
    min-width: 0;
    padding: 0;
    border: 0;
    outline: 0;
    background: none;
    color: #f3f3f7;
    font-family: inherit;
    font-size: 32px;
  }

  input {
    flex: 1;
    font-weight: 500;
  }

  input::placeholder, textarea::placeholder {
    color: #8f8f97;
    opacity: 1;
  }

  .notes-label {
    margin: 34px 0 29px;
    text-align: center;
  }

  textarea {
    flex: 1;
    box-sizing: border-box;
    padding: 18px 16px;
    border: 2px solid #232429;
    border-radius: 16px;
    background: #050509;
    font-size: 30px;
    line-height: 36px;
    resize: none;
  }

  .home-bar {
    align-self: center;
    width: 229px;
    height: 8px;
    margin-bottom: 3px;
    border-radius: 4px;
    background: #ececec;
  }
</style>
